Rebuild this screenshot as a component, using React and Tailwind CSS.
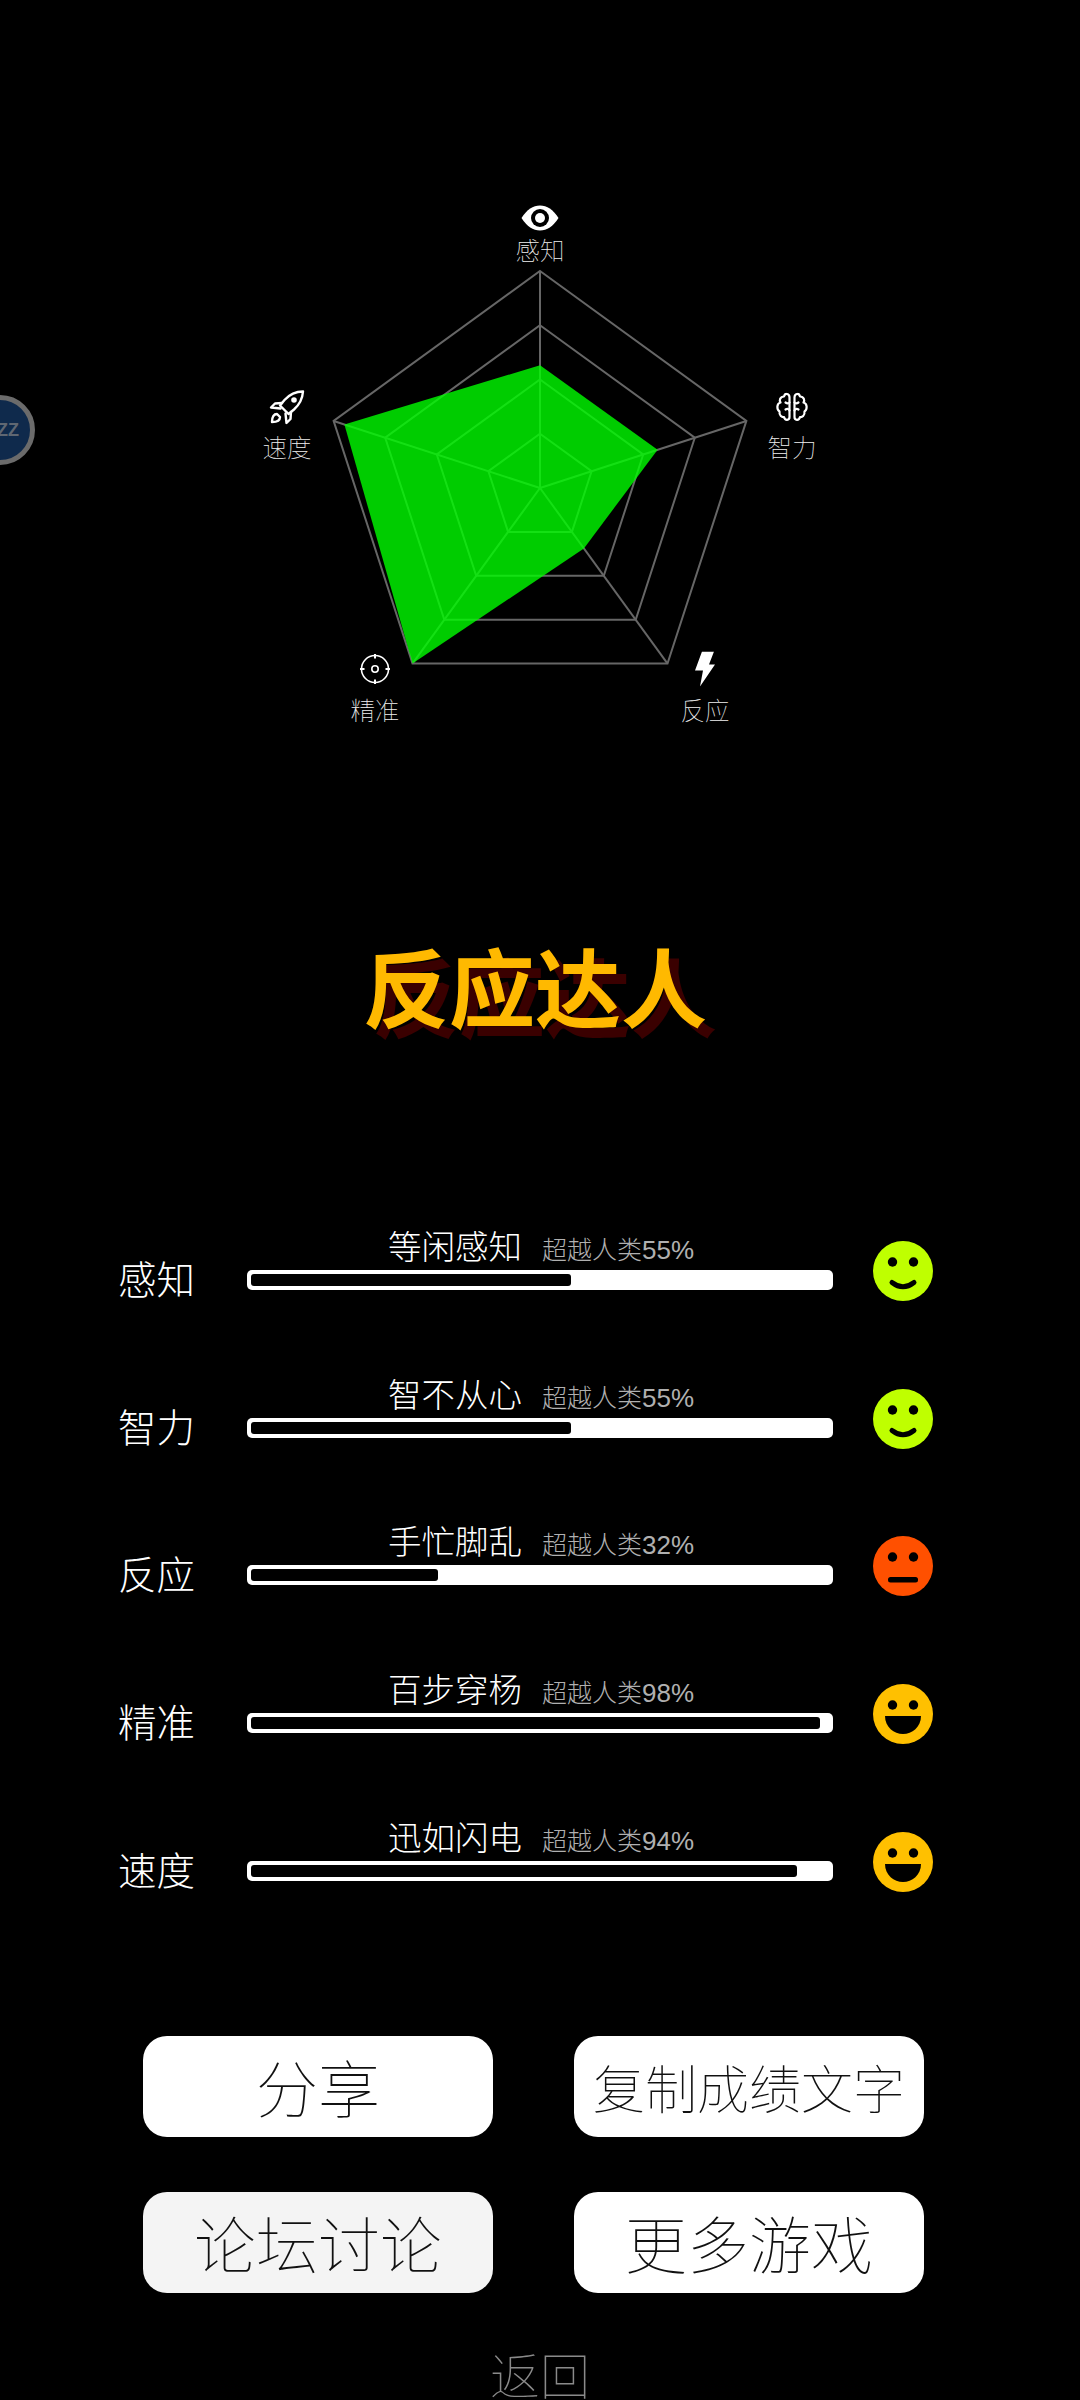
const cx = 320, cy = 288, R = 217;
const angles = [-90, -18, 54, 126, 198].map((d) => (d * Math.PI) / 180);
const pt = (i, f) => [cx + R * f * Math.cos(angles[i]), cy + R * f * Math.sin(angles[i])];
const poly = (vals) => vals.map((f, i) => pt(i, f).map((n) => n.toFixed(1)).join(",")).join(" ");

const sans = "font-['Noto_Sans_CJK_SC','Noto_Sans',sans-serif]";

function Radar() {
  return (
    <svg viewBox="0 0 640 530" width="640" height="530" className="block">
      {[1, 0.75, 0.5, 0.25].map((f) => (
        <polygon key={f} points={poly([f, f, f, f, f])} fill="none" stroke="#666" strokeWidth="2" />
      ))}
      {[0, 1, 2, 3, 4].map((i) => {
        const [x, y] = pt(i, 1);
        return <line key={i} x1={cx} y1={cy} x2={x} y2={y} stroke="#666" strokeWidth="2" />;
      })}
      <polygon points={poly([0.566, 0.57, 0.344, 1, 0.948])} fill="rgba(0,255,0,0.8)" />
    </svg>
  );
}

const EyeIcon = () => (
  <svg width="38" height="26" viewBox="0 0 38 26">
    <path d="M0.5 13 C6 4.5 12 0.5 19 0.5 C26 0.5 32 4.5 37.5 13 C32 21.5 26 25.5 19 25.5 C12 25.5 6 21.5 0.5 13Z" fill="#fff" />
    <circle cx="19" cy="13" r="9" fill="#000" />
    <circle cx="19" cy="13" r="5" fill="#fff" />
  </svg>
);
const RocketIcon = () => (
  <svg width="36" height="36" viewBox="0 0 36 36" fill="none" stroke="#fff" strokeWidth="2.4" strokeLinejoin="round" strokeLinecap="round">
    <path d="M34 2.5 C26 2.5 20 6 15.5 11 L11 16.5 L19.5 25 L25 20.5 C30 16 33.5 10 34 2.5Z" />
    <circle cx="25" cy="11" r="1.6" fill="#fff" />
    <path d="M13 14 L6 14.5 L2 18.5 L11.5 19.5" />
    <path d="M22 23 L21.5 30 L17.5 34 L16.5 24.5" />
    <path d="M8 25 C5 25 3 27.5 3 33 C8.5 33 11 31 11 28Z" />
  </svg>
);
const BrainIcon = () => (
  <svg width="32" height="29" viewBox="0 0 32 29" fill="none" stroke="#fff" strokeWidth="2.2" strokeLinejoin="round" strokeLinecap="round">
    <path d="M13.5 5 C13.5 1 9 0 8 4 C4 4 3 8 4.5 10 C0.5 11 0.5 17 3.5 19 C3 23 6 25 8 24.5 C9 28.5 13.5 28 13.5 24.5Z" />
    <path d="M18.5 5 C18.5 1 23 0 24 4 C28 4 29 8 27.5 10 C31.5 11 31.5 17 28.5 19 C29 23 26 25 24 24.5 C23 28.5 18.5 28 18.5 24.5Z" />
    <path d="M13.5 10 C12.5 11.5 11 11 9.5 10 M13.5 18 C12.5 16 11 16 9.5 17" />
    <path d="M18.5 10 C19.5 11.5 21 11 22.5 10 M18.5 18 C19.5 16 21 16 22.5 17" />
  </svg>
);
const TargetIcon = () => (
  <svg width="30" height="30" viewBox="0 0 30 30" fill="none" stroke="#fff" strokeWidth="1.6">
    <circle cx="15" cy="15" r="13.5" />
    <circle cx="15" cy="15" r="3.2" />
    <path d="M15 0 V4.5 M15 25.5 V30 M0 15 H4.5 M25.5 15 H30" strokeWidth="2" />
  </svg>
);
const BoltIcon = () => (
  <svg width="20" height="35" viewBox="0 0 20 35">
    <path d="M7 0 H19 L14 13 H20 L5 35 L8 19 H0Z" fill="#fff" />
  </svg>
);

const labels = [
  { t: "感知", x: 320, iy: 18, ly: 36, I: EyeIcon },
  { t: "智力", x: 572, iy: 207, ly: 233, I: BrainIcon },
  { t: "反应", x: 485, iy: 469, ly: 496, I: BoltIcon },
  { t: "精准", x: 155, iy: 469, ly: 496, I: TargetIcon },
  { t: "速度", x: 67, iy: 207, ly: 233, I: RocketIcon },
];

function AxisLabel({ t, x, iy, ly, I }) {
  return (
    <>
      <div className="absolute -translate-x-1/2 -translate-y-1/2 flex" style={{ left: x, top: iy }}>
        <I />
      </div>
      <div
        className={`absolute -translate-x-1/2 text-[24.5px] leading-[28px] font-thin text-[#f0f0f0] whitespace-nowrap ${sans}`}
        style={{ left: x, top: ly }}
      >
        {t}
      </div>
    </>
  );
}

function Face({ color, kind }) {
  return (
    <svg width="60" height="60" viewBox="0 0 60 60" className="block">
      <circle cx="30" cy="30" r="30" fill={color} />
      <circle cx="19.5" cy="21" r="4.7" fill="#000" />
      <circle cx="40.5" cy="21" r="4.7" fill="#000" />
      {kind === "smile" && <path d="M19 41.5 Q30 50 41 41.5" fill="none" stroke="#000" strokeWidth="5" strokeLinecap="round" />}
      {kind === "flat" && <rect x="15" y="41" width="30" height="5.5" rx="2.5" fill="#000" />}
      {kind === "laugh" && <path d="M12 32 H48 C48 43 39 50 30 50 C21 50 12 43 12 32Z" fill="#000" />}
    </svg>
  );
}

const stats = [
  { name: "感知", title: "等闲感知", pct: 55, color: "#bfff00", kind: "smile" },
  { name: "智力", title: "智不从心", pct: 55, color: "#bfff00", kind: "smile" },
  { name: "反应", title: "手忙脚乱", pct: 32, color: "#ff5000", kind: "flat" },
  { name: "精准", title: "百步穿杨", pct: 98, color: "#ffc000", kind: "laugh" },
  { name: "速度", title: "迅如闪电", pct: 94, color: "#ffc000", kind: "laugh" },
];

function StatRow({ s }) {
  return (
    <div className="flex h-[147.7px] items-start">
      <div className="w-[129px] pt-[30px] text-[38.5px] leading-[54px] font-light text-white">{s.name}</div>
      <div className="w-[586px]">
        <div className="grid h-[46px] grid-cols-2">
          <div className="pr-[18px] pt-[2px] text-right text-[33.5px] leading-[46px] font-light text-white whitespace-nowrap">{s.title}</div>
          <div className="pl-[2px] pt-[5px] text-[25px] leading-[46px] font-light text-[#b0b0b0] whitespace-nowrap">
            超越人类<span className="font-['Liberation_Sans',sans-serif] text-[26px] font-normal">{s.pct}%</span>
          </div>
        </div>
        <div className="mt-[4px] h-[20px] rounded-[5px] bg-white p-[4px]">
          <div className="h-[12px] rounded-[3px] bg-black" style={{ width: `${s.pct + 0.4}%` }} />
        </div>
      </div>
      <div className="ml-[40px] pt-[21px]">
        <Face color={s.color} kind={s.kind} />
      </div>
    </div>
  );
}

function Btn({ children, small, gray }) {
  return (
    <div
      className={`flex h-[101px] w-[350px] items-center justify-center rounded-[24px] font-thin text-[#111] whitespace-nowrap ${
        small ? "text-[52px]" : "text-[62px]"
      } ${gray ? "bg-[#f4f4f4]" : "bg-white"}`}
    >
      {children}
    </div>
  );
}

export default function App() {
  return (
    <div className={`relative h-[2400px] w-[1080px] overflow-hidden bg-black ${sans}`}>
      <div className="absolute left-[-35px] top-[395px] flex h-[70px] w-[70px] items-center justify-end rounded-full border-[5px] border-[#6b6b6b] bg-[#0f2a4c] pr-[11px] text-[18px] font-bold text-[#5f6772]" style={{ fontFamily: "Liberation Sans, sans-serif" }}>
        ZZ
      </div>

      <div className="relative ml-[220px] mt-[200px] h-[530px] w-[640px]">
        <Radar />
        {labels.map((l) => (
          <AxisLabel key={l.t} {...l} />
        ))}
      </div>

      <div className="mt-[193px] pr-[10px] text-center text-[86px] leading-[124px] font-bold text-[#ffb900] [text-shadow:10px_10px_0_#3a0000]">
        反应达人
      </div>

      <div className="ml-[118px] mt-[173px]">
        {stats.map((s) => (
          <StatRow key={s.name} s={s} />
        ))}
      </div>

      <div className="ml-[143px] mt-[78px] grid w-[781px] grid-cols-2 gap-x-[81px] gap-y-[55px]">
        <Btn>分享</Btn>
        <Btn small>复制成绩文字</Btn>
        <Btn gray>论坛讨论</Btn>
        <Btn>更多游戏</Btn>
      </div>

      <div className="mt-[44px] text-center text-[50px] leading-[72px] font-thin text-[#8a8a8a]">返回</div>
    </div>
  );
}
